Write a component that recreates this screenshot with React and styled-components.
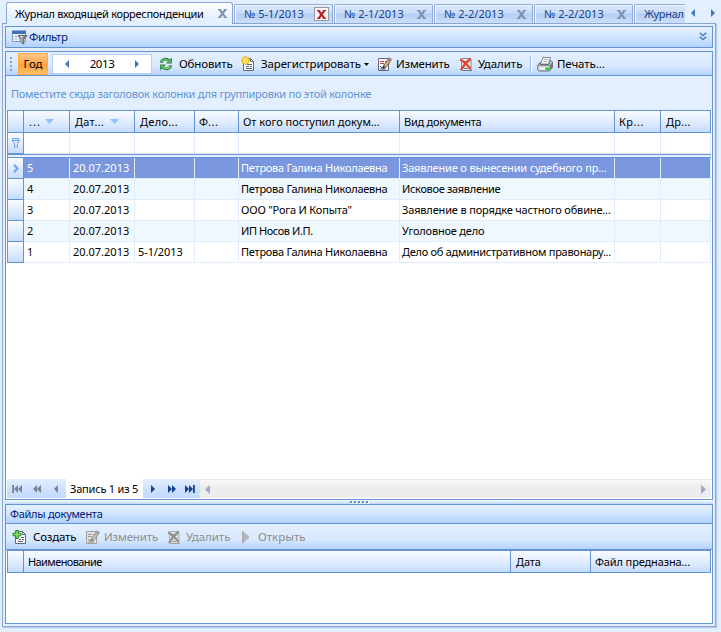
import React from 'react';
import styled, { createGlobalStyle } from 'styled-components';

const LINE = '#6494d4';
const GRID = '#e0edff';

const GlobalStyle = createGlobalStyle`
  * { box-sizing: border-box; }
  body { margin: 0; font: 11px/13px "Noto Sans", sans-serif; color: #000; }
  svg { display: block; flex: none; }
`;

const Page = styled.div`
  width: 721px;
  height: 632px;
  overflow: hidden;
  background: #e3efff;
  display: flex;
  flex-direction: column;
`;

/* Tab strip */
const TabStrip = styled.div`
  flex: none;
  height: 24px;
  margin-bottom: -1px;
  padding-left: 6px;
  display: flex;
  align-items: flex-end;
  position: relative;
  z-index: 1;
`;
const ActiveTab = styled.div`
  width: 227px;
  height: 22px;
  padding: 0 5px 1px 8px;
  display: flex;
  align-items: center;
  justify-content: space-between;
  border: 1px solid #8ba6d3;
  border-bottom: 0;
  border-radius: 3px 3px 0 0;
  background: linear-gradient(#ffffff, #e6f0ff 70%, #e3efff);
  letter-spacing: -0.29px;
`;
const TabList = styled.div`
  width: 452px;
  overflow: hidden;
  display: flex;
  gap: 1px;
  padding: 0 0 1px 1px;
`;
const Tab = styled.div`
  flex: none;
  width: 99px;
  height: 19px;
  padding: 0 3px 1px 9px;
  display: flex;
  align-items: center;
  justify-content: space-between;
  border: 1px solid #92aedb;
  border-bottom: 0;
  border-radius: 2px 2px 0 0;
  box-shadow: inset 1px 1px 0 #f1f7ff;
  background: linear-gradient(#dbe9fd, #c8dcf8 45%, #b5cef3 50%, #cbdff9);
  color: #15428b;
  letter-spacing: ${(p) => p.$ls || 0}px;
`;
const CloseBox = styled.span`
  width: 15px;
  height: 14px;
  margin-top: 1px;
  display: flex;
  align-items: center;
  justify-content: center;
  border: 1px solid ${(p) => (p.$hot ? '#9a9aa5' : 'transparent')};
  background: ${(p) => (p.$hot ? '#f7f4f5' : 'transparent')};
`;
const TabArrows = styled.div`
  flex: 1;
  height: 22px;
  padding: 0 6px 0 6px;
  display: flex;
  align-items: center;
  justify-content: space-between;
`;

/* Document frame */
const Frame = styled.div`
  flex: none;
  width: 714px;
  height: 604px;
  margin-left: 2px;
  padding: 2px;
  display: flex;
  flex-direction: column;
  border: 1px solid #8ba6d3;
  box-shadow: 1px 1px 1px #b5c9e8;
`;
const FilterBar = styled.div`
  flex: none;
  height: 22px;
  padding: 0 5px 1px 6px;
  display: flex;
  align-items: center;
  gap: 1px;
  border: 1px solid ${LINE};
  background: linear-gradient(#e6f1ff, #c9e0ff 65%, #b3d2ff);
  color: #00217a;
  font-size: 11.5px;
  letter-spacing: -0.45px;
`;
const Spacer = styled.div`flex: 1;`;
const Workspace = styled.section`
  flex: none;
  height: 449px;
  margin-top: 3px;
  display: flex;
  flex-direction: column;
  border: 1px solid ${LINE};
  background: #fff;
`;

/* Toolbars */
const Toolbar = styled.div`
  flex: none;
  height: 24px;
  display: flex;
  align-items: center;
  padding-left: ${(p) => p.$pad || 0}px;
  border-bottom: 1px solid ${LINE};
  background: linear-gradient(#e3efff, #dae9fe 60%, #b5d3fe);
  font-size: 11.5px;
  line-height: 16px;
`;
const Grip = styled.div`
  width: 2px;
  height: 14px;
  margin: 0 6px 0 4px;
  background: repeating-linear-gradient(#7da3db 0 2px, transparent 2px 4px);
`;
const YearButton = styled.div`
  width: 30px;
  height: 22px;
  text-align: center;
  letter-spacing: -0.1px;
  border: 1px solid #ffab3f;
  background: linear-gradient(#ffc586, #ffab52 45%, #ffa23f 55%, #ffbd69);
  line-height: 20px;
`;
const YearEditor = styled.div`
  width: 100px;
  height: 20px;
  margin: 0 6px 0 4px;
  padding: 0 12px 0 12px;
  display: flex;
  align-items: center;
  justify-content: space-between;
  border: 1px solid #b3cff8;
  background: #fff;
  letter-spacing: -0.4px;
`;
const ToolButton = styled.div`
  flex: none;
  width: ${(p) => p.$w}px;
  display: flex;
  align-items: center;
  gap: ${(p) => p.$gap || 5}px;
  letter-spacing: ${(p) => p.$ls || 0}px;
  color: ${(p) => (p.$off ? '#8d8d8d' : '#000')};
  white-space: nowrap;
`;
const DropArrow = styled.svg`
  margin: 1px 0 0 -2px;
`;
const Separator = styled.div`
  width: 2px;
  height: 16px;
  margin-right: 5px;
  border-left: 1px solid #9ac0f5;
  border-right: 1px solid #fff;
`;

/* Grid */
const GroupPanel = styled.div`
  flex: none;
  height: 34px;
  padding: 11px 0 0 5px;
  background: #e3efff;
  color: #6494d4;
  letter-spacing: -0.24px;
`;
const GridBox = styled.div`
  flex: none;
  margin: 0 1px;
  border: solid ${LINE};
  border-width: 1px 0 0 1px;
`;
const columns = '16px 46px 65px 60px 44px 161px 215px 46px 50px';
const fileColumns = '16px 487px 80px 120px';
const HeaderRow = styled.div`
  height: 22px;
  display: grid;
  grid-template-columns: ${(p) => p.$cols};
  border-bottom: 1px solid ${LINE};
  background: linear-gradient(#f8fbff, #e1edff 50%, #c4dcff);
`;
const HeaderCell = styled.div`
  padding: 0 0 1px ${(p) => p.$pad || 4}px;
  display: flex;
  align-items: center;
  gap: ${(p) => p.$gap || 0}px;
  white-space: nowrap;
  letter-spacing: ${(p) => p.$ls || 0}px;
  border-right: 1px solid ${LINE};
`;
const BodyRow = styled.div`
  height: 21px;
  display: grid;
  grid-template-columns: ${columns};
  background: ${(p) => (p.$selected ? '#7a96df' : p.$alt ? '#f0f8ff' : '#fff')};
  color: ${(p) => (p.$selected ? '#fff' : '#000')};
`;
const Cell = styled.div`
  padding: 3px 0 0 ${(p) => p.$pad || 3}px;
  white-space: nowrap;
  overflow: hidden;
  letter-spacing: ${(p) => p.$ls || 0}px;
  border: solid ${GRID};
  border-width: 0 1px 1px 0;
`;
const Indicator = styled.div`
  display: flex;
  align-items: center;
  justify-content: center;
  border: solid ${LINE};
  border-width: 0 1px 1px 0;
  background: linear-gradient(#f8fbff, #e1edff 50%, #c4dcff);
`;
const FixedLine = styled.div`
  height: 4px;
  border: solid ${LINE};
  border-width: 1px 0;
  background: #e3efff;
`;
const Blank = styled.div`flex: 1;`;

/* Record navigator */
const Navigator = styled.div`
  flex: none;
  height: 20px;
  margin: 0 1px;
  padding-bottom: 1px;
  display: flex;
`;
const NavButtons = styled.div`
  width: ${(p) => p.$w}px;
  padding: 0 4px;
  display: flex;
  align-items: center;
  justify-content: space-between;
  background: linear-gradient(#e3efff, #cfe2ff 50%, #c2dbff);
`;
const NavText = styled.div`
  width: 77px;
  padding: 3px 0 0 4px;
  white-space: nowrap;
  letter-spacing: -0.2px;
`;
const ScrollBar = styled.div`
  flex: 1;
  padding: 0 5px;
  display: flex;
  align-items: center;
  justify-content: space-between;
  border-top: 1px solid #e6e6e6;
  background: linear-gradient(#f8f8f8, #ececec 45%, #eeeeee);
`;
const Splitter = styled.div`
  flex: none;
  height: 4px;
  display: flex;
  justify-content: center;
  align-items: center;
  background: linear-gradient(#ffffff, #b9d6ff);
`;

/* Files panel */
const FilesPanel = styled.section`
  flex: none;
  height: 120px;
  display: flex;
  flex-direction: column;
  border: 1px solid ${LINE};
  background: #fff;
`;
const PanelTitle = styled.div`
  flex: none;
  height: 19px;
  padding: 2px 0 0 4px;
  border-bottom: 1px solid ${LINE};
  background: linear-gradient(#e6f1ff, #c9e0ff 60%, #b3d2ff);
  color: #00217a;
  letter-spacing: -0.28px;
`;
const FilesToolbar = styled(Toolbar)`
  height: 26px;
`;

/* Glyphs */
const Cross = ({ color = '#7f93b5' }) => (
  <svg width="9" height="9" viewBox="0 0 9 9">
    <path d="M1.800 .8 7.200 8.200M7.200 .8 1.800 8.200" stroke={color} strokeWidth="2.200" />
    <path d="M0 .7h3.200M5.800 .7H9M0 8.300h3.200M5.800 8.300H9" stroke={color} strokeWidth="1.200" />
  </svg>
);
const Triangle = ({ left, color = '#3f73ba', h = 8 }) => (
  <svg width={Math.ceil(h / 2)} height={h} viewBox="0 0 4 8" preserveAspectRatio="none">
    <path d={left ? 'M4 0v8L0 4z' : 'M0 0v8L4 4z'} fill={color} />
  </svg>
);
const NavGlyph = ({ kind, left, color }) => (
  <svg width="12" height="8" viewBox="0 0 12 8" transform={left ? 'scale(-1 1)' : undefined}>
    {kind === 'one' && <path d="M4 0v8l4-4z" fill={color} />}
    {kind === 'page' && <path d="M2 0v8l4-4zM6 0v8l4-4z" fill={color} />}
    {kind === 'end' && <path d="M1 0v8l4-4zM5 0v8l4-4zM9 0h1.800v8H9z" fill={color} />}
  </svg>
);
const SortMark = () => (
  <svg width="9" height="5" viewBox="0 0 9 5"><path d="M0 0h9L4.500 5z" fill="#8fc1ff" /></svg>
);
const FunnelMark = () => (
  <svg width="8" height="10" viewBox="0 0 8 10" fill="#dcebff" stroke="#6da3ea">
    <path d="M.5 .5h6.500v2.500L5.500 5.500v3.500h-3v-3.500L.5 3zM.5 2.500h6.500" />
  </svg>
);
const RowMark = () => (
  <svg width="6" height="9" viewBox="0 0 6 9"><path d="M1 .7 4.500 4.500 1 8.300" fill="none" stroke="#6da3ea" strokeWidth="2.100" /></svg>
);
const Chevrons = () => (
  <svg width="8" height="9" viewBox="0 0 8 9" fill="none" stroke="#3f73ba" strokeWidth="1.300">
    <path d="M.8 .7 4 3.700 7.200 .7M.8 4.700 4 7.700 7.200 4.700" />
  </svg>
);
const DotRow = () => (
  <svg width="19" height="3" viewBox="0 0 19 3" shapeRendering="crispEdges">
    {[0, 4, 8, 12, 16].map((x) => (
      <g key={x}><path d={`M${x + 1} 1h2v2h-2z`} fill="#fff" /><path d={`M${x} 0h2v2h-2z`} fill="#5c8fd2" /></g>
    ))}
  </svg>
);
const TableFilterIcon = () => (
  <svg width="16" height="16" viewBox="0 0 16 16">
    <path d="M.5 2.500h13v10H.5z" fill="#fff" stroke="#7f98c4" />
    <path d="M0 1.500h14v3.500H0z" fill="#3f70b8" />
    <path d="M1 7.500h12M1 10h12M4 5v7M7.500 5v7M10.500 5v7" stroke="#b7c5df" />
    <path d="M6 6.500h9l-3.200 3.800V15L9 13.500v-3.200z" fill="#83868c" stroke="#55585e" strokeWidth=".8" />
    <path d="M7.500 7.200h3.800L10 9.500z" fill="#e3e5e8" />
    <path d="M10 10v3.500" stroke="#d0d3d8" />
  </svg>
);
const RefreshIcon = () => (
  <svg width="16" height="16" viewBox="0 0 16 16" fill="none">
    <path d="M3.300 6.800C3.800 3.200 8.600 2 11 4.800" stroke="#2c8a40" strokeWidth="3" />
    <path d="M14 1.500v6H8z" fill="#2c8a40" />
    <path d="M3.600 6.400C4.200 3.600 8.400 2.500 10.800 5" stroke="#74c873" strokeWidth="1.300" />
    <path d="M12.700 9.200c-.5 3.600-5.300 4.800-7.700 2" stroke="#2c8a40" strokeWidth="3" />
    <path d="M2 14.500v-6h6z" fill="#2c8a40" />
    <path d="M12.400 9.600c-.6 2.800-4.800 3.900-7.200 1.400" stroke="#8fd98c" strokeWidth="1.300" />
    <path d="M13.200 3.800v2.800h-2.800zM2.800 12.200V9.400h2.800z" fill="#74c873" />
  </svg>
);
const Sheet = ({ off }) => (
  <>
    <path d="M3.500 2.500h7l3 3v9h-10z" fill={off ? '#e3e3e3' : '#fdfdff'} stroke={off ? '#a0a0a0' : '#5d6a7f'} />
    <path d="M10.500 2.500v3h3" fill="none" stroke={off ? '#a0a0a0' : '#5d6a7f'} />
  </>
);
const RegisterIcon = () => (
  <svg width="16" height="16" viewBox="0 0 16 16">
    <Sheet />
    <path d="M7 8.500h5M6 10.500h3M10 10.500h2M6 12.500h6" stroke="#54647e" />
    <path d="M5.500 0v9M1 4.500h9M2.500 1.500l6 6M8.500 1.500l-6 6" stroke="#f5ac00" strokeWidth="1.800" />
    <circle cx="5.500" cy="4.500" r="2.700" fill="#ffe64d" />
  </svg>
);
const EditIcon = ({ off }) => (
  <svg width="16" height="16" viewBox="0 0 16 16">
    <path d="M1.500 2.500h10v12h-10z" fill={off ? '#e3e3e3' : '#fdfdff'} stroke={off ? '#a0a0a0' : '#5d6a7f'} />
    <path d="M3 5.500h4M8 5.500h2M3 7.500h4" stroke={off ? '#9a9a9a' : '#c04848'} />
    <path d="M3 10l2 2 3-3.500M3 13h6" fill="none" stroke={off ? '#8e8e8e' : '#31507e'} />
    <path d="M7.200 11l5-6.500" stroke={off ? '#8e8e8e' : '#6b5330'} strokeWidth="3.600" />
    <path d="M7.800 10.200l4.200-5.400" stroke={off ? '#cfcfcf' : '#e9c98c'} strokeWidth="1.700" />
    <path d="M11.500 5.200l2.200-2.800" stroke={off ? '#a0a0a0' : '#a88072'} strokeWidth="3.600" />
    <path d="M5.800 13l.3-2.800 2.200 1.600z" fill={off ? '#808080' : '#222'} />
  </svg>
);
const DeleteIcon = ({ off }) => (
  <svg width="16" height="16" viewBox="0 0 16 16">
    <path d="M3.500 2.500h8l1.500 1v11H3.500z" fill={off ? '#dedede' : '#e3e9f2'} stroke={off ? '#b0b0b0' : '#7d8ba2'} />
    <path d="M6 5.500h4M6 12.500h4M5 14.500h9" stroke={off ? '#a0a0a0' : '#66758c'} />
    <path d="M2 3.500c3 1.500 7.500 5.500 10.500 9.500M12.800 2.500C9 5.500 5.500 9.500 3 14" fill="none" stroke={off ? '#929292' : '#e5452c'} strokeWidth="2.400" />
  </svg>
);
const PrintIcon = () => (
  <svg width="16" height="16" viewBox="0 0 16 16">
    <path d="M6 1.500h7.500L11.500 8h-8z" fill="#fff" stroke="#7f8794" />
    <path d="M7 3.500h4.500M6.300 5.500h4.500" stroke="#a9b0bb" />
    <path d="M1 8.500l2.500-2-.5 2h9l1.500-4L15.500 6v5.500L12.500 15H2l-1.500-1.500z" fill="#d5d8dd" stroke="#6b717c" />
    <path d="M12.500 9.500l3-3.500v5.500l-3 3.500z" fill="#747a85" />
    <path d="M1 9.500h11" stroke="#8b909a" />
    <path d="M2 12.500h6" stroke="#f6f7f9" strokeWidth="1.500" />
    <path d="M8.500 11.500h3.500V14H8.500z" fill="#22d127" />
  </svg>
);
const CreateIcon = () => (
  <svg width="16" height="16" viewBox="0 0 16 16">
    <Sheet />
    <path d="M9 8.500h3M7 10.500h2M10 10.500h2M6 12.500h5" stroke="#54647e" />
    <path d="M3.700 1.500h2.600v2.700H9v2.600H6.300v2.700H3.700V6.800H1V4.200h2.700z" fill="#7fd768" stroke="#238a24" />
  </svg>
);
const OpenIcon = () => (
  <svg width="15" height="16" viewBox="0 0 15 16">
    <path d="M4.500 2.500v11.500L11 8.200z" fill="#b5b5b5" stroke="#9b9b9b" strokeWidth=".7" />
  </svg>
);

const tabs = ['№ 5-1/2013', '№ 2-1/2013', '№ 2-2/2013', '№ 2-2/2013', 'Журнал'];
const records = [
  { n: '5', deal: '', from: 'Петрова Галина Николаевна', kind: 'Заявление о вынесении судебного пр...', ks: -0.17 },
  { n: '4', deal: '', from: 'Петрова Галина Николаевна', kind: 'Исковое заявление', ks: -0.32 },
  { n: '3', deal: '', from: 'ООО "Рога И Копыта"', fs: -0.18, kind: 'Заявление в порядке частного обвине...', ks: -0.16 },
  { n: '2', deal: '', from: 'ИП Носов И.П.', fs: -0.42, kind: 'Уголовное дело', ks: -0.2 },
  { n: '1', deal: '5-1/2013', from: 'Петрова Галина Николаевна', kind: 'Дело об административном правонару...', ks: -0.27 },
];

export default function App() {
  return (
    <Page>
      <GlobalStyle />
      <TabStrip>
        <ActiveTab>Журнал входящей корреспонденции<Cross /></ActiveTab>
        <TabList>
          {tabs.map((label, i) => (
            <Tab key={i} $ls={i === 4 ? -0.3 : 0.03}>
              {label}
              <CloseBox $hot={i === 0}><Cross color={i === 0 ? '#b3262e' : '#8193b3'} /></CloseBox>
            </Tab>
          ))}
        </TabList>
        <TabArrows><Triangle left /><Triangle /></TabArrows>
      </TabStrip>

      <Frame>
        <FilterBar><TableFilterIcon />Фильтр<Spacer /><Chevrons /></FilterBar>

        <Workspace>
          <Toolbar>
            <Grip />
            <YearButton>Год</YearButton>
            <YearEditor><Triangle left />2013<Triangle /></YearEditor>
            <ToolButton $w={82} $ls={-0.15}><RefreshIcon />Обновить</ToolButton>
            <ToolButton $w={137} $ls={-0.13}>
              <RegisterIcon />Зарегистрировать
              <DropArrow width="5" height="3" viewBox="0 0 5 3"><path d="M0 0h5L2.500 3z" /></DropArrow>
            </ToolButton>
            <ToolButton $w={81} $gap={3} $ls={-0.2}><EditIcon />Изменить</ToolButton>
            <ToolButton $w={72} $gap={4} $ls={-0.07}><DeleteIcon />Удалить</ToolButton>
            <Separator />
            <ToolButton $w={80} $gap={4} $ls={-0.1}><PrintIcon />Печать...</ToolButton>
          </Toolbar>

          <GroupPanel>Поместите сюда заголовок колонки для группировки по этой колонке</GroupPanel>

          <GridBox>
            <HeaderRow $cols={columns}>
              <HeaderCell />
              <HeaderCell $pad={5} $gap={4} $ls={1}>...<SortMark /></HeaderCell>
              <HeaderCell $pad={5} $gap={6} $ls={0.3}>Дат...<SortMark /></HeaderCell>
              <HeaderCell $pad={5} $ls={0.3}>Дело...</HeaderCell>
              <HeaderCell $ls={0.5}>Ф...</HeaderCell>
              <HeaderCell>От кого поступил докум...</HeaderCell>
              <HeaderCell $ls={-0.25}>Вид документа</HeaderCell>
              <HeaderCell $ls={0.5}>Кр...</HeaderCell>
              <HeaderCell $pad={5} $ls={0.2}>Др...</HeaderCell>
            </HeaderRow>
            <BodyRow>
              <Indicator><FunnelMark /></Indicator>
              {Array.from({ length: 8 }, (_, i) => <Cell key={i} />)}
            </BodyRow>
            <FixedLine />
            {records.map((r, i) => (
              <BodyRow key={r.n} $selected={i === 0} $alt={i % 2 === 1}>
                <Indicator>{i === 0 && <RowMark />}</Indicator>
                <Cell>{r.n}</Cell>
                <Cell>20.07.2013</Cell>
                <Cell $ls={-0.1}>{r.deal}</Cell>
                <Cell />
                <Cell $pad={2} $ls={r.fs || -0.25}>{r.from}</Cell>
                <Cell $pad={2} $ls={r.ks}>{r.kind}</Cell>
                <Cell />
                <Cell />
              </BodyRow>
            ))}
          </GridBox>
          <Blank />
          <Navigator>
            <NavButtons $w={59}>
              <NavGlyph kind="end" left color="#7c8290" />
              <NavGlyph kind="page" left color="#7c8290" />
              <NavGlyph kind="one" left color="#7c8290" />
            </NavButtons>
            <NavText>Запись 1 из 5</NavText>
            <NavButtons $w={57}>
              <NavGlyph kind="one" color="#15428b" />
              <NavGlyph kind="page" color="#15428b" />
              <NavGlyph kind="end" color="#15428b" />
            </NavButtons>
            <ScrollBar><Triangle left h={9} color="#9aa9cc" /><Triangle h={9} color="#9aa9cc" /></ScrollBar>
          </Navigator>
        </Workspace>

        <Splitter><DotRow /></Splitter>

        <FilesPanel>
          <PanelTitle>Файлы документа</PanelTitle>
          <FilesToolbar $pad={6}>
            <ToolButton $w={73} $ls={-0.2}><CreateIcon />Создать</ToolButton>
            <ToolButton $w={81} $gap={3} $off $ls={-0.15}><EditIcon off />Изменить</ToolButton>
            <ToolButton $w={72} $gap={4} $off $ls={-0.07}><DeleteIcon off />Удалить</ToolButton>
            <ToolButton $w={72} $gap={5} $off><OpenIcon />Открыть</ToolButton>
          </FilesToolbar>
          <GridBox>
            <HeaderRow $cols={fileColumns}>
              <HeaderCell />
              <HeaderCell $ls={-0.6}>Наименование</HeaderCell>
              <HeaderCell $pad={5} $ls={-0.1}>Дата</HeaderCell>
              <HeaderCell $ls={-0.13}>Файл предназна...</HeaderCell>
            </HeaderRow>
          </GridBox>
        </FilesPanel>
      </Frame>
    </Page>
  );
}
